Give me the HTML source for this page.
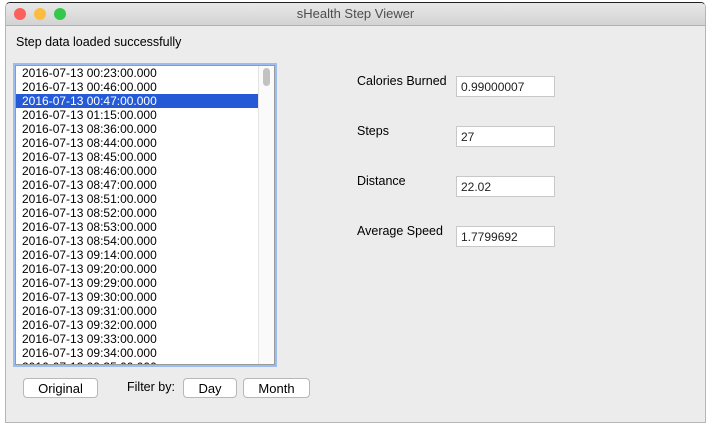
<!DOCTYPE html><html><head><style>
body{margin:0;width:714px;height:429px;background:#fff;position:relative;overflow:hidden;font-family:"Liberation Sans",sans-serif;font-size:12px;color:#000}
.win{position:absolute;left:5px;top:2px;width:701px;height:421px;background:#ececec;border:1px solid #b5b5b5;border-top:1px solid #222;box-sizing:border-box;border-radius:5px 5px 0 0;overflow:hidden}
.tb{height:22px;background:linear-gradient(#e8e8e8,#d3d3d3);border-bottom:1px solid #b0b0b0;text-align:center;line-height:22px;font-size:13px;color:#4d4d4d}
.d{position:absolute;top:5px;width:12px;height:12px;border-radius:50%}
.a{position:absolute}
.list{position:absolute;left:9px;top:62px;width:258px;height:298px;background:#fff;border:1px solid #9a9a9a;box-shadow:0 0 0 2px #9dbdf2;overflow:hidden}
.row{height:14px;line-height:14px;padding-left:6px;font-size:12px}
.sel{background:#245ad6;color:#fff;margin-right:16px}
.sb{position:absolute;right:0;top:0;width:15px;height:100%;border-left:1px solid #e3e3e3;background:#fafafa}
.th{position:absolute;left:4px;top:2px;width:7px;height:18px;background:#c2c2c2;border-radius:4px}
.btn{position:absolute;height:20px;background:#fff;border:1px solid #b8b8b8;border-radius:4px;text-align:center;line-height:19px;font-size:13px;box-sizing:border-box}
.fld{position:absolute;left:450px;width:99px;height:21px;background:#fff;border:1px solid #c8c8c8;box-sizing:border-box;padding-left:4px;line-height:20px;font-size:12px;color:#222}
.lbl{position:absolute;left:351px;font-size:12.5px}
</style></head><body>
<div class="win">
<div class="tb">sHealth Step Viewer</div>
<div class="d" style="left:8px;background:#fc605c"></div>
<div class="d" style="left:28px;background:#fdbc40"></div>
<div class="d" style="left:48px;background:#34c84a"></div>
<div class="a" style="left:10px;top:32px;font-size:12.5px">Step data loaded successfully</div>
<div class="list">
<div class="row">2016-07-13 00:23:00.000</div>
<div class="row">2016-07-13 00:46:00.000</div>
<div class="row sel">2016-07-13 00:47:00.000</div>
<div class="row">2016-07-13 01:15:00.000</div>
<div class="row">2016-07-13 08:36:00.000</div>
<div class="row">2016-07-13 08:44:00.000</div>
<div class="row">2016-07-13 08:45:00.000</div>
<div class="row">2016-07-13 08:46:00.000</div>
<div class="row">2016-07-13 08:47:00.000</div>
<div class="row">2016-07-13 08:51:00.000</div>
<div class="row">2016-07-13 08:52:00.000</div>
<div class="row">2016-07-13 08:53:00.000</div>
<div class="row">2016-07-13 08:54:00.000</div>
<div class="row">2016-07-13 09:14:00.000</div>
<div class="row">2016-07-13 09:20:00.000</div>
<div class="row">2016-07-13 09:29:00.000</div>
<div class="row">2016-07-13 09:30:00.000</div>
<div class="row">2016-07-13 09:31:00.000</div>
<div class="row">2016-07-13 09:32:00.000</div>
<div class="row">2016-07-13 09:33:00.000</div>
<div class="row">2016-07-13 09:34:00.000</div>
<div class="row">2016-07-13 09:35:00.000</div>
<div class="sb"><div class="th"></div></div>
</div>
<div class="btn" style="left:17px;top:375px;width:75px">Original</div>
<div class="a" style="left:121px;top:377px;font-size:12.5px">Filter by:</div>
<div class="btn" style="left:177px;top:375px;width:54px">Day</div>
<div class="btn" style="left:237px;top:375px;width:67px">Month</div>
<div class="lbl" style="top:71px">Calories Burned</div><div class="fld" style="top:73px">0.99000007</div>
<div class="lbl" style="top:121px">Steps</div><div class="fld" style="top:123px">27</div>
<div class="lbl" style="top:171px">Distance</div><div class="fld" style="top:173px">22.02</div>
<div class="lbl" style="top:221px">Average Speed</div><div class="fld" style="top:223px">1.7799692</div>
</div>
</body></html>
